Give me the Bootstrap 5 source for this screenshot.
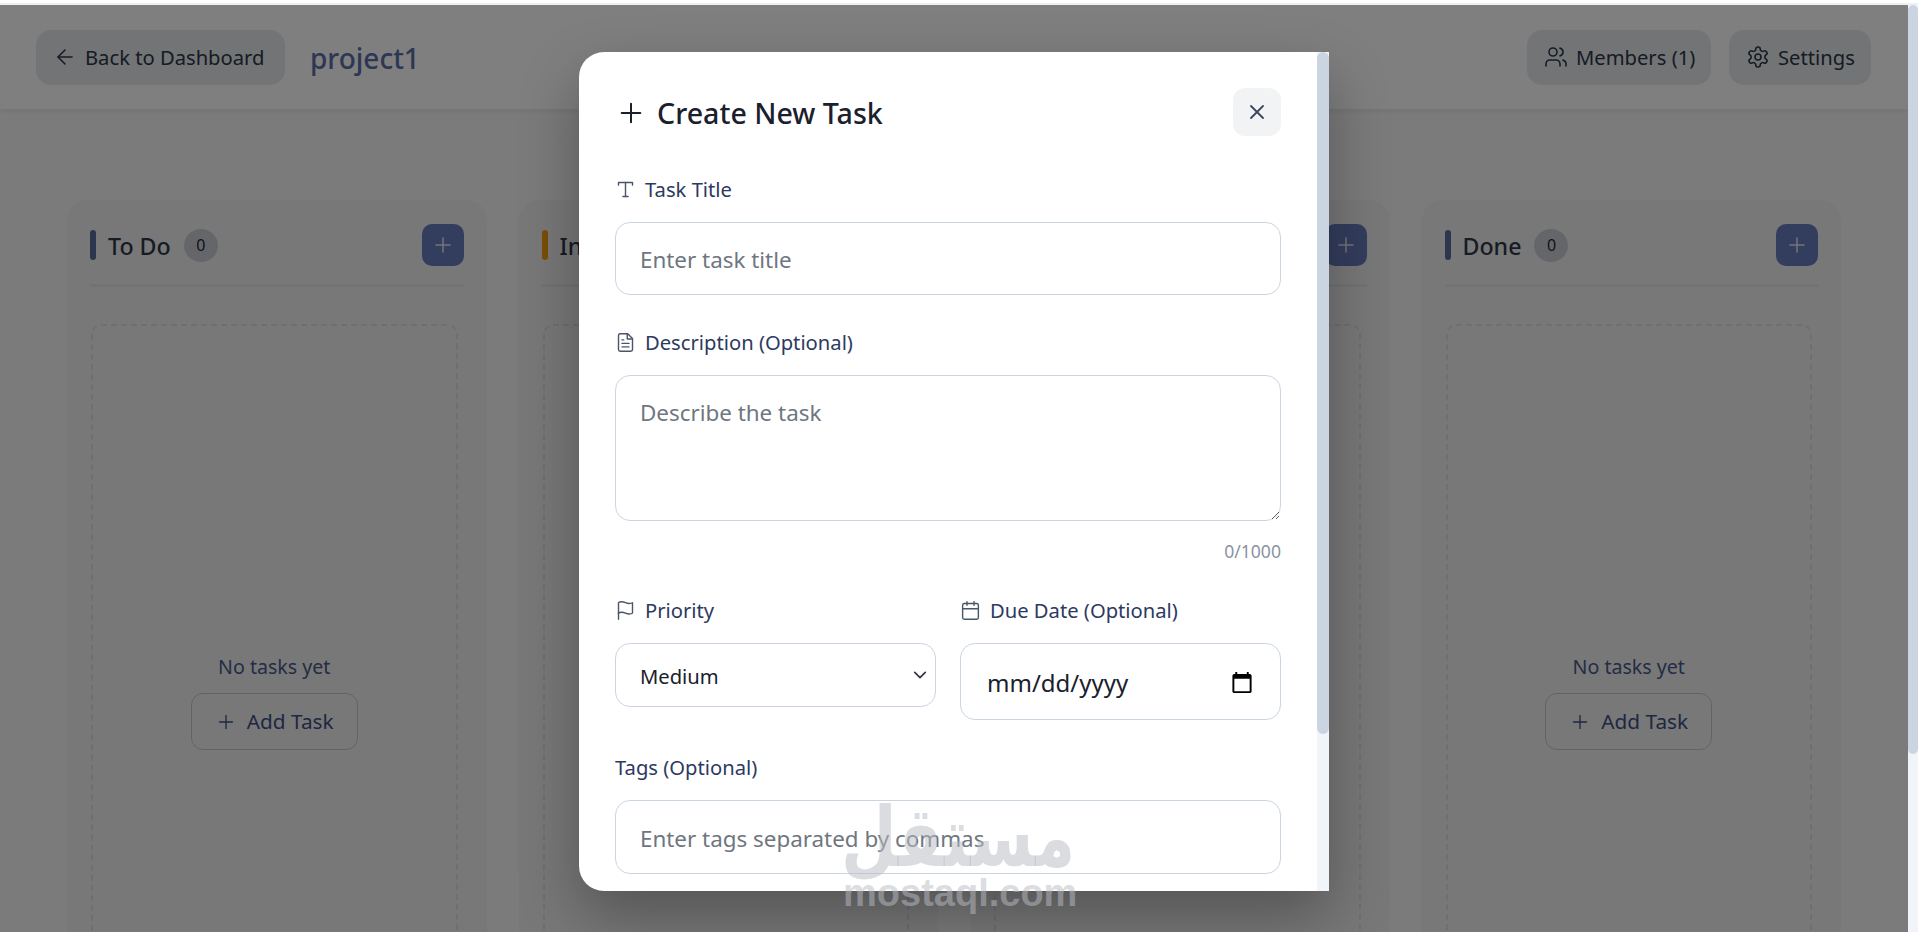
<!DOCTYPE html>
<html lang="en">
<head>
  <meta charset="UTF-8">
  <title>project1 - Create New Task</title>
  <meta name="viewport" content="width=device-width, initial-scale=1">
  <link href="https://cdn.jsdelivr.net/npm/bootstrap@5.3.0/dist/css/bootstrap.min.css" rel="stylesheet">
  <style>
    html, body { height: 100%; overflow: hidden; }
    body {
      font-family: "Noto Sans", "Liberation Sans", sans-serif;
      background: #f6f7f9;
      color: #2d3748;
    }
    .ic { fill: none; stroke: currentColor; stroke-width: 2; stroke-linecap: round; stroke-linejoin: round; flex-shrink: 0; }
    .top-strip { height: 5px; background: #f0f0f0; border-top: 3px solid #fff; }
    .page-wrap { height: calc(100% - 5px); }
    .page-area { position: relative; overflow: hidden; }
    .page-scroll { width: 10px; background: #f1f5f9; }
    .page-thumb { height: 749px; background: #cbd5e1; border-radius: 5px; }

    .top-bar { height: 104px; padding: 0 37px 0 36px; background: #fff; box-shadow: 0 2px 6px rgba(0,0,0,.08); }
    .bar-btn {
      height: 55px; padding: 0 0 0 17px; gap: 8px; border: 0; border-radius: 15px;
      background: #e6e8eb; color: #2d3748; font-size: 20.2px;
    }
    .bar-btn .ic { width: 24px; height: 24px; stroke-width: 1.6; }
    .back-btn { width: 249px; }
    .members-btn { width: 184px; }
    .settings-btn { width: 142px; }
    .bar-gap { gap: 18px; }
    .project-name { margin-left: 25px; padding-top: 2px; font-size: 28px; font-weight: 500; color: #5a6ea8; line-height: 1; }

    .board { padding: 91px 67px 0 67px; gap: 32px; }
    .board-col { flex: 1 1 0; min-width: 0; padding: 24px 23px 0; height: 1000px; background: #f0f1f3; border-radius: 20px; }
    .col-head { height: 63px; padding-bottom: 18px; border-bottom: 3px solid #e4e6e9; }
    .col-title { height: 42px; }
    .col-bar { width: 6px; height: 30px; border-radius: 3px; margin-right: 12px; background: #5a6a9f; }
    .col-bar.amber { background: #f59e0b; }
    .col-name { padding-top: 4px; font-size: 23.2px; font-weight: 500; color: #2d3748; line-height: 1; }
    .col-count {
      width: 34px; height: 33px; margin-left: 13px; border-radius: 50%;
      background: #c9ccd2; color: #1f2937; font-size: 16px; font-weight: 400;
    }
    .add-mini {
      width: 42px; height: 42px; padding: 0; border: 0; border-radius: 10px;
      background: #667aba; color: #e8ebf5;
    }
    .add-mini .ic { width: 24px; height: 24px; stroke-width: 1.5; }
    .drop-zone {
      height: 756px; margin: 37px 6px 0 1px; border: 2px dashed #dcdee2; border-radius: 10px;
      padding-top: 329px; color: #4a5a8a;
    }
    .empty-note { font-size: 19.6px; margin-bottom: 14px; line-height: 24px; }
    .add-task {
      width: 167px; height: 57px; gap: 10px; padding: 0; border: 1px solid #c2c6cd; border-radius: 12px;
      color: #3f4f82; background: transparent; font-size: 20.8px;
    }
    .add-task .ic { width: 22px; height: 22px; stroke-width: 1.5; }

    .dim-layer { position: absolute; inset: 0; background: rgba(0,0,0,.5); z-index: 10; }
    .task-modal {
      position: absolute; left: 579px; top: 47px; width: 750px; height: 839px; z-index: 20;
      overflow: hidden; background: #fff; border-radius: 25px 0 0 25px;
      box-shadow: 0 25px 60px rgba(0,0,0,.3);
    }
    .task-body { flex: 1 1 0; min-width: 0; padding: 36px 36px 0 36px; }
    .task-scroll { width: 12px; background: #f1f5f9; }
    .task-thumb { height: 682px; background: #cbd5e1; border-radius: 6px; }
    .task-head { height: 48px; margin-bottom: 41px; }
    .task-heading { padding-top: 2px; font-size: 28.6px; font-weight: 500; color: #1a202c; margin: 0; line-height: 1; gap: 10px; }
    .task-heading .ic { width: 32px; height: 32px; stroke-width: 1.5; }
    .task-close { width: 48px; height: 48px; padding: 0; border: 0; border-radius: 12px; background: #f1f3f5; color: #3a4560; }
    .task-close .ic { width: 24px; height: 24px; stroke-width: 1.8; }
    .task-label {
      height: 24px; margin-bottom: 21px; gap: 9px; font-size: 20.2px; font-weight: 400; line-height: 24px; color: #2d3a5f;
    }
    .task-label .ic { width: 21px; height: 21px; stroke-width: 1.6; color: #4a5568; }
    .task-input.form-control, .task-input.form-select {
      height: 73px; padding: 2px 24px 0; border: 1px solid #cbd5e1; border-radius: 15px;
      font-size: 22.4px; color: #1a202c; box-shadow: none;
    }
    .task-input::placeholder { color: #6f7680; opacity: 1; }
    textarea.task-input.form-control { height: 146px; padding: 20px 24px 16px; }
    .task-input.form-select { height: 64px; background-position: right 6px center; background-size: 18px 14px; font-size: 20.2px; }
    .task-input.date-input { height: 77px; padding-left: 26px; padding-right: 24px; font-size: 24px; }
    .tags-input.form-control { height: 74px; }
    .group-gap { margin-bottom: 35px; }
    .char-count { height: 24px; margin: 18px 0 35px; font-size: 17.6px; line-height: 24px; text-align: right; color: #8a93a3; }

    .mostaql-mark {
      position: absolute; left: 843px; top: 788px; width: 232px; z-index: 30; pointer-events: none;
      text-align: center; color: rgba(184,188,196,.52); font-weight: 700;
    }
    .mostaql-ar { font-family: "DejaVu Sans", sans-serif; font-size: 64px; line-height: 86px; transform: translateY(4px) scaleY(1.3); transform-origin: 50% 40%; }
    .mostaql-en { font-family: "Liberation Sans", sans-serif; font-size: 38px; line-height: 38px; }
  </style>
</head>
<body>

  <svg width="0" height="0" class="position-absolute">
    <symbol id="i-back" viewBox="0 0 24 24"><path d="m12 19-7-7 7-7"/><path d="M19 12H5"/></symbol>
    <symbol id="i-users" viewBox="0 0 24 24"><path d="M16 21v-2a4 4 0 0 0-4-4H6a4 4 0 0 0-4 4v2"/><circle cx="9" cy="7" r="4"/><path d="M22 21v-2a4 4 0 0 0-3-3.87"/><path d="M16 3.13a4 4 0 0 1 0 7.75"/></symbol>
    <symbol id="i-gear" viewBox="0 0 24 24"><path d="M12.22 2h-.44a2 2 0 0 0-2 2v.18a2 2 0 0 1-1 1.73l-.43.25a2 2 0 0 1-2 0l-.15-.08a2 2 0 0 0-2.73.73l-.22.38a2 2 0 0 0 .73 2.73l.15.1a2 2 0 0 1 1 1.72v.51a2 2 0 0 1-1 1.74l-.15.09a2 2 0 0 0-.73 2.73l.22.38a2 2 0 0 0 2.73.73l.15-.08a2 2 0 0 1 2 0l.43.25a2 2 0 0 1 1 1.73V20a2 2 0 0 0 2 2h.44a2 2 0 0 0 2-2v-.18a2 2 0 0 1 1-1.73l.43-.25a2 2 0 0 1 2 0l.15.08a2 2 0 0 0 2.73-.73l.22-.39a2 2 0 0 0-.73-2.73l-.15-.08a2 2 0 0 1-1-1.74v-.5a2 2 0 0 1 1-1.74l.15-.09a2 2 0 0 0 .73-2.73l-.22-.38a2 2 0 0 0-2.73-.73l-.15.08a2 2 0 0 1-2 0l-.43-.25a2 2 0 0 1-1-1.73V4a2 2 0 0 0-2-2z"/><circle cx="12" cy="12" r="3"/></symbol>
    <symbol id="i-plus" viewBox="0 0 24 24"><path d="M5 12h14"/><path d="M12 5v14"/></symbol>
    <symbol id="i-x" viewBox="0 0 24 24"><path d="M18 6 6 18"/><path d="m6 6 12 12"/></symbol>
    <symbol id="i-type" viewBox="0 0 24 24"><path d="M4 7V4h16v3"/><path d="M9 20h6"/><path d="M12 4v16"/></symbol>
    <symbol id="i-file" viewBox="0 0 24 24"><path d="M14.5 2H6a2 2 0 0 0-2 2v16a2 2 0 0 0 2 2h12a2 2 0 0 0 2-2V7.5L14.5 2z"/><path d="M14 2v6h6"/><path d="M16 13H8"/><path d="M16 17H8"/><path d="M10 9H8"/></symbol>
    <symbol id="i-flag" viewBox="0 0 24 24"><path d="M4 15s1-1 4-1 5 2 8 2 4-1 4-1V3s-1 1-4 1-5-2-8-2-4 1-4 1z"/><path d="M4 22v-7"/></symbol>
    <symbol id="i-cal" viewBox="0 0 24 24"><rect x="3" y="4" width="18" height="18" rx="2"/><path d="M16 2v4"/><path d="M8 2v4"/><path d="M3 10h18"/></symbol>
  </svg>

  <div class="top-strip"></div>
  <div class="page-wrap d-flex">
    <div class="page-area flex-grow-1">
      <header class="top-bar d-flex align-items-center justify-content-between">
        <div class="d-flex align-items-center">
          <button class="btn bar-btn back-btn d-flex align-items-center"><svg class="ic"><use href="#i-back"/></svg>Back to Dashboard</button>
          <span class="project-name">project1</span>
        </div>
        <div class="d-flex bar-gap">
          <button class="btn bar-btn members-btn d-flex align-items-center"><svg class="ic"><use href="#i-users"/></svg>Members (1)</button>
          <button class="btn bar-btn settings-btn d-flex align-items-center"><svg class="ic"><use href="#i-gear"/></svg>Settings</button>
        </div>
      </header>

      <main class="board d-flex" id="board"></main>

      <div class="dim-layer"></div>

      <div class="task-modal d-flex">
        <form class="task-body">
          <div class="task-head d-flex align-items-center justify-content-between">
            <h2 class="task-heading d-flex align-items-center"><svg class="ic"><use href="#i-plus"/></svg>Create New Task</h2>
            <button type="button" class="btn task-close d-flex align-items-center justify-content-center"><svg class="ic"><use href="#i-x"/></svg></button>
          </div>

          <label class="task-label d-flex align-items-center"><svg class="ic"><use href="#i-type"/></svg>Task Title</label>
          <input type="text" class="form-control task-input group-gap" placeholder="Enter task title">

          <label class="task-label d-flex align-items-center"><svg class="ic"><use href="#i-file"/></svg>Description (Optional)</label>
          <textarea class="form-control task-input" placeholder="Describe the task"></textarea>
          <div class="char-count">0/1000</div>

          <div class="row gx-4 group-gap">
            <div class="col-6">
              <label class="task-label d-flex align-items-center"><svg class="ic"><use href="#i-flag"/></svg>Priority</label>
              <select class="form-select task-input"><option>Low</option><option selected>Medium</option><option>High</option></select>
            </div>
            <div class="col-6">
              <label class="task-label d-flex align-items-center"><svg class="ic"><use href="#i-cal"/></svg>Due Date (Optional)</label>
              <input type="date" class="form-control task-input date-input">
            </div>
          </div>

          <label class="task-label d-flex align-items-center">Tags (Optional)</label>
          <input type="text" class="form-control task-input tags-input" placeholder="Enter tags separated by commas">
        </form>
        <div class="task-scroll"><div class="task-thumb"></div></div>
      </div>
    </div>
    <div class="page-scroll"><div class="page-thumb"></div></div>
  </div>

  <div class="mostaql-mark">
    <div class="mostaql-ar" lang="ar" dir="rtl">مستقل</div>
    <div class="mostaql-en">mostaql.com</div>
  </div>

  <script>
    const columns = [
      { name: "To Do", bar: "" },
      { name: "In Progress", bar: "amber" },
      { name: "Review", bar: "" },
      { name: "Done", bar: "" }
    ];
    document.getElementById("board").innerHTML = columns.map(c => `
      <section class="board-col">
        <div class="col-head d-flex align-items-start justify-content-between">
          <div class="col-title d-flex align-items-center">
            <span class="col-bar ${c.bar}"></span>
            <span class="col-name">${c.name}</span>
            <span class="col-count d-flex align-items-center justify-content-center">0</span>
          </div>
          <button class="btn add-mini d-flex align-items-center justify-content-center"><svg class="ic"><use href="#i-plus"/></svg></button>
        </div>
        <div class="drop-zone text-center">
          <div class="empty-note">No tasks yet</div>
          <button class="btn add-task d-inline-flex align-items-center justify-content-center"><svg class="ic"><use href="#i-plus"/></svg>Add Task</button>
        </div>
      </section>`).join("");
  </script>
  <script src="https://cdn.jsdelivr.net/npm/bootstrap@5.3.0/dist/js/bootstrap.bundle.min.js"></script>
</body>
</html>
